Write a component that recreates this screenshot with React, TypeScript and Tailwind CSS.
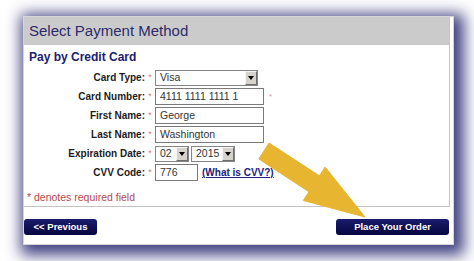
import React from "react"

function DropBtn() {
  return (
    <div className="w-[12px] h-[14px] bg-[#d6d3cc] border border-t-[#f4f4f4] border-l-[#f4f4f4] border-r-[#6f6f6f] border-b-[#6f6f6f] flex items-center justify-center">
      <div className="w-0 h-0 border-l-[3px] border-r-[3px] border-t-[4px] border-l-transparent border-r-transparent border-t-black" />
    </div>
  )
}

function FakeSelect({ value, width }: { value: string; width: string }) {
  return (
    <div className={`${width} h-[16px] border border-[#858585] bg-white flex items-center justify-between pl-[4px] pr-[0px]`}>
      <span className="text-[10.5px] text-[#333]">{value}</span>
      <DropBtn />
    </div>
  )
}

function TextBox({ value, width }: { value: string; width: string }) {
  return (
    <div className={`${width} h-[17px] border border-[#7a7a7a] bg-white flex items-center pl-[4px]`}>
      <span className="text-[10.5px] text-[#333]">{value}</span>
    </div>
  )
}

function Row({ label, children }: { label: string; children: React.ReactNode }) {
  return (
    <div className="h-[19px] flex items-center">
      <div className="w-[121px] text-right text-[10px] font-bold text-[#1c1c1c]">{label}</div>
      <div className="w-[10px] text-center text-[9px] text-[#e07575]">*</div>
      {children}
    </div>
  )
}

export default function App() {
  return (
    <div className="w-[474px] h-[261px] bg-white relative overflow-hidden pt-[16px] pl-[23px] font-['Liberation_Sans',Arial,sans-serif]">
      <div className="w-[431px] h-[229px] bg-white border border-[#d6d6d6] shadow-[4px_4px_14px_6px_rgba(50,50,120,0.92)] flex flex-col">
        {/* panel */}
        <div className="mr-[3px] h-[190px] border-r border-b border-[#c4c4c4] flex flex-col">
          <div className="h-[28px] bg-[#cbcbcb] flex items-center pl-[5px]">
            <span className="text-[15px] text-[#2b2b6b]">Select Payment Method</span>
          </div>
          <div className="pt-[5px] pl-[5px] text-[12px] leading-[14px] font-bold text-[#20206e]">Pay by Credit Card</div>
          <div className="mt-[4px] flex flex-col">
            <Row label="Card Type:">
              <FakeSelect value="Visa" width="w-[103px]" />
            </Row>
            <Row label="Card Number:">
              <TextBox value="4111 1111 1111 1" width="w-[109px]" />
              <span className="ml-[5px] text-[8px] text-[#d9a0a0]">*</span>
            </Row>
            <Row label="First Name:">
              <TextBox value="George" width="w-[109px]" />
            </Row>
            <Row label="Last Name:">
              <TextBox value="Washington" width="w-[109px]" />
            </Row>
            <Row label="Expiration Date:">
              <div className="flex gap-[2px]">
                <FakeSelect value="02" width="w-[34px]" />
                <FakeSelect value="2015" width="w-[44px]" />
              </div>
            </Row>
            <Row label="CVV Code:">
              <TextBox value="776" width="w-[43px]" />
              <a className="ml-[4px] text-[10px] font-bold text-[#22227a] underline">(What is CVV?)</a>
            </Row>
          </div>
          <div className="mt-[9px] pl-[3px] text-[10.5px] leading-[12px] text-[#b84a4a]">* denotes required field</div>
        </div>
        {/* footer */}
        <div className="flex justify-between pr-[4px] pt-[12px]">
          <button className="w-[73px] h-[16px] rounded-[3px] bg-gradient-to-b from-[#1c1c6e] to-[#06063f] text-white text-[9.5px] font-bold">&lt;&lt; Previous</button>
          <button className="w-[113px] h-[16px] rounded-[3px] bg-gradient-to-b from-[#1c1c6e] to-[#06063f] text-white text-[9.5px] font-bold">Place Your Order</button>
        </div>
      </div>
      <svg className="absolute left-0 top-0 pointer-events-none" width="474" height="261" viewBox="0 0 474 261">
        <polygon
          points="269,143 319.4,175.8 325.1,167.1 365,217 303.3,200.5 309,191.8 258.8,159"
          fill="#e7b52f"
          stroke="#e7b52f"
          strokeWidth="1"
          strokeLinejoin="round"
        />
      </svg>
    </div>
  )
}
